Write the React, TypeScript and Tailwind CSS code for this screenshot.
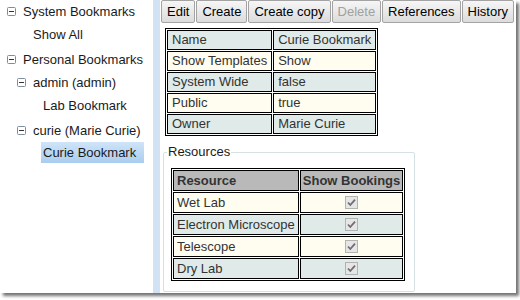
const detailRows = [
  { label: 'Name', value: 'Curie Bookmark' },
  { label: 'Show Templates', value: 'Show' },
  { label: 'System Wide', value: 'false' },
  { label: 'Public', value: 'true' },
  { label: 'Owner', value: 'Marie Curie' },
];

const resources = ['Wet Lab', 'Electron Microscope', 'Telescope', 'Dry Lab'];

const actions = ['Edit', 'Create', 'Create copy', 'Delete', 'References', 'History'];

// Small boxed minus used by expanded tree nodes
function Collapse() {
  return (
    <svg width="9" height="9" viewBox="0 0 9 9" className="shrink-0">
      <rect x="0.5" y="0.5" width="8" height="8" rx="1" fill="#fff" stroke="#7d8d9c" />
      <line x1="2" y1="4.5" x2="7" y2="4.5" stroke="#333" />
    </svg>
  );
}

function DisabledCheck() {
  return (
    <svg width="13" height="13" viewBox="0 0 13 13" className="mx-auto block">
      <rect x="0.5" y="0.5" width="12" height="12" fill="#e6e6e6" stroke="#b3b3b3" />
      <path d="M3 6.5 L5.3 9 L10 3.6" stroke="#6e6e6e" strokeWidth="1.8" fill="none" />
    </svg>
  );
}

function TreeRow({
  indent,
  expandable,
  selected,
  children,
  className = '',
}: {
  indent: number;
  expandable?: boolean;
  selected?: boolean;
  children: React.ReactNode;
  className?: string;
}) {
  return (
    <div className={`flex h-[23px] items-start ${className}`} style={{ paddingLeft: indent }}>
      {expandable ? (
        <div className="flex h-[23px] items-center gap-[7px]">
          <Collapse />
          <span>{children}</span>
        </div>
      ) : selected ? (
        <span className="flex h-[21px] items-center bg-gradient-to-b from-[#cfe4f8] to-[#a9cdef] pl-[2px] pr-[8px]">
          {children}
        </span>
      ) : (
        <span className="flex h-[23px] items-center">{children}</span>
      )}
    </div>
  );
}

export default function App() {
  return (
    <div className="h-[300px] w-[520px] bg-white font-['Liberation_Sans',Arial,sans-serif] text-[13px] text-[#1a1a1a]">
      <div className="flex h-[293px] w-[516px] bg-white shadow-[3px_3px_3px_rgba(0,0,0,0.55)]">
        {/* Bookmark tree */}
        <aside className="w-[153px] shrink-0">
          <TreeRow indent={7} expandable>System Bookmarks</TreeRow>
          <TreeRow indent={33}>Show All</TreeRow>
          <TreeRow indent={7} expandable className="mt-[2px]">Personal Bookmarks</TreeRow>
          <TreeRow indent={17} expandable>admin (admin)</TreeRow>
          <TreeRow indent={43}>Lab Bookmark</TreeRow>
          <TreeRow indent={17} expandable className="mt-[2px]">curie (Marie Curie)</TreeRow>
          <TreeRow indent={41} selected>Curie Bookmark</TreeRow>
        </aside>
        <div className="w-[7px] shrink-0 bg-[#d0e2f3]" />

        {/* Detail panel */}
        <main className="min-w-0 flex-1">
          <div className="ml-px flex gap-px">
            {actions.map((a) => (
              <button
                key={a}
                className={`h-[23px] shrink-0 whitespace-nowrap rounded-[2px] border border-[#a3a3a3] bg-gradient-to-b from-[#f6f6f6] to-[#dcdcdc] px-[5px] leading-none ${
                  a === 'Delete' ? 'text-[#a0a0a0]' : 'text-black'
                }`}
              >
                {a}
              </button>
            ))}
          </div>

          <table className="ml-[5px] mt-[5px] border-separate border-spacing-px border border-black text-[#333]">
            <tbody>
              {detailRows.map((r, i) => (
                <tr key={r.label} className={i % 2 === 0 ? 'bg-[#dfeae9]' : 'bg-[#fffdf0]'}>
                  <td className="h-[20px] border border-black px-[4px] py-0 leading-[16px]">{r.label}</td>
                  <td className="h-[20px] border border-black px-[4px] py-0 leading-[16px]">{r.value}</td>
                </tr>
              ))}
            </tbody>
          </table>

          <fieldset className="ml-[3px] mt-[8px] h-[148px] w-[252px] rounded-[2px] border border-[#d6e1e6] px-[7px]">
            <legend className="-ml-[4px] px-[1px] leading-[16px] text-[#1a1a1a]">Resources</legend>
            <table className="mt-[8px] border-separate border-spacing-px border border-black text-[#333]">
              <thead>
                <tr className="bg-[#b9b9b9]">
                  <th className="h-[21px] border border-black px-[3px] text-left font-bold leading-[17px]">Resource</th>
                  <th className="h-[21px] border border-black px-[2px] font-bold leading-[17px]">Show Bookings</th>
                </tr>
              </thead>
              <tbody>
                {resources.map((r, i) => (
                  <tr key={r} className={i % 2 === 0 ? 'bg-[#fffdf0]' : 'bg-[#dfeae9]'}>
                    <td className="h-[21px] border border-black px-[3px] leading-[17px]">{r}</td>
                    <td className="h-[21px] border border-black px-[2px]">
                      <DisabledCheck />
                    </td>
                  </tr>
                ))}
              </tbody>
            </table>
          </fieldset>
        </main>
      </div>
    </div>
  );
}
